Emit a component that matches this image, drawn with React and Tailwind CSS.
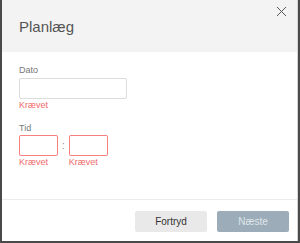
import { X } from "lucide-react";

function Field({ label, children }) {
    return (
        <div className="flex flex-col">
            <div className="text-[9px] leading-[12px] text-[#777]">{label}</div>
            {children}
        </div>
    );
}

function TimeBox() {
    return (
        <div className="flex flex-col">
            <div className="w-[39px] h-[21px] rounded-[2px] bg-white shadow-[inset_0_0_0_1px_#f58080]" />
            <div className="text-[9px] leading-[13px] text-[#f26b6b]">Krævet</div>
        </div>
    );
}

export default function App() {
    return (
        <div
            className="w-[300px] h-[243px] bg-[#4a4a4a] pl-[2px] pr-[2px] pb-[2px] flex"
            style={{ fontFamily: "'Liberation Sans', Arial, sans-serif" }}
        >
            <div className="flex-1 flex flex-col bg-white border-r border-[#d6d6d6]">
                <div className="h-[52px] bg-[#f3f3f3] relative flex items-center pl-[17px]">
                    <div className="text-[15px] text-[#555] mt-[3px]">Planlæg</div>
                    <X
                        size={17}
                        strokeWidth={1.4}
                        className="absolute right-[7px] top-[3px] text-[#555]"
                    />
                </div>
                <div className="flex-1 pl-[17px] pt-[12px] flex flex-col gap-[10px]">
                    <Field label="Dato">
                        <div className="w-[108px] h-[21px] mt-[2px] border border-[#dcdcdc] rounded-[2px]" />
                        <div className="text-[9px] leading-[13px] text-[#f26b6b]">Krævet</div>
                    </Field>
                    <Field label="Tid">
                        <div className="flex items-start gap-[4px] mt-[1px]">
                            <TimeBox />
                            <div className="text-[10px] text-[#888] leading-[21px]">:</div>
                            <TimeBox />
                        </div>
                    </Field>
                </div>
                <div className="h-[42px] border-t border-[#ededed] flex items-start justify-end gap-[10px] pt-[11px] pr-[8px]">
                    <button className="w-[72px] h-[21px] bg-[#e9e9e9] rounded-[2px] text-[10px] text-[#333]">
                        Fortryd
                    </button>
                    <button className="w-[72px] h-[21px] bg-[#9cacb8] rounded-[2px] text-[10px] text-[#dfe6ea]">
                        Næste
                    </button>
                </div>
            </div>
        </div>
    );
}
